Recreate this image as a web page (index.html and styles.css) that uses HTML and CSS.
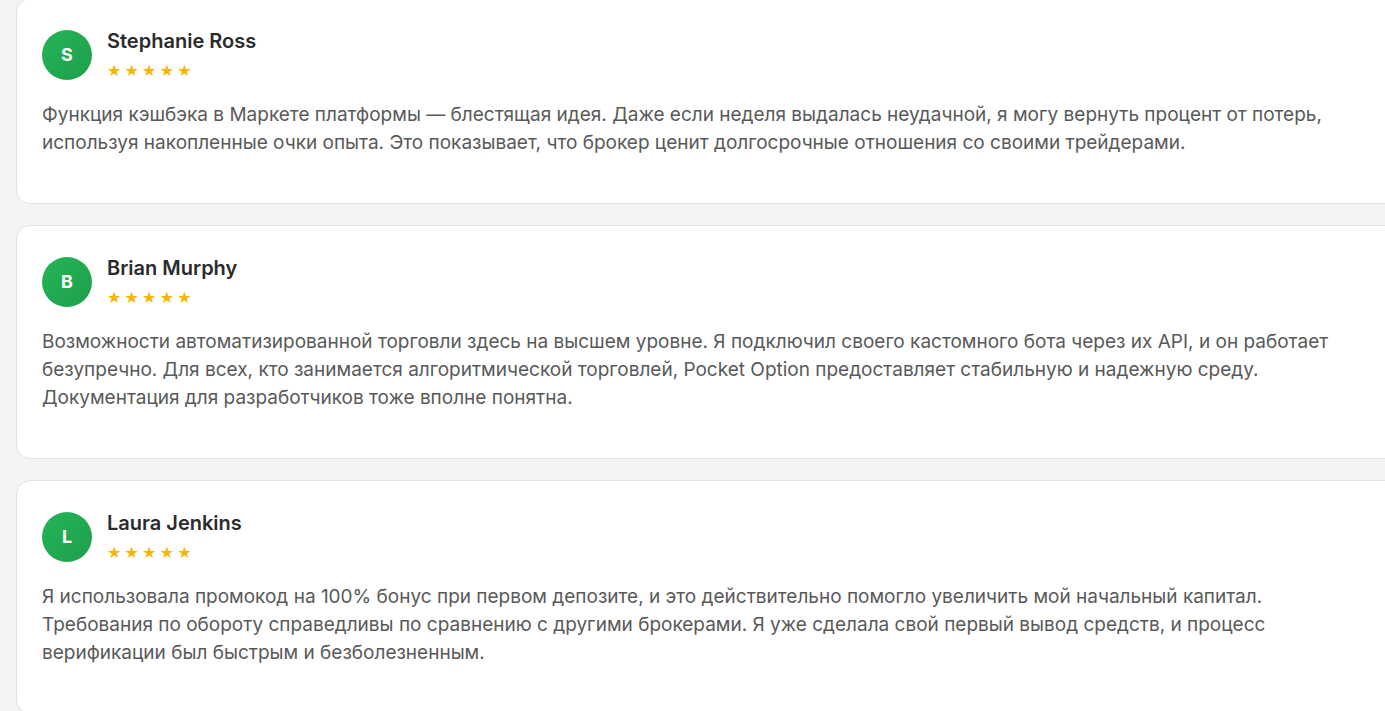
FILE: index.html
```html
<!DOCTYPE html>
<html lang="ru">
<head>
<meta charset="utf-8">
<title>Отзывы</title>
<link rel="stylesheet" href="styles.css">
</head>
<body>
<div class="reviews">
  <article class="card">
    <div class="head">
      <div class="avatar">S</div>
      <div class="meta">
        <div class="name">Stephanie Ross</div>
        <div class="stars">★★★★★</div>
      </div>
    </div>
    <p class="text">Функция кэшбэка в Маркете платформы — блестящая идея. Даже если неделя выдалась неудачной, я могу вернуть процент от потерь, используя накопленные очки опыта. Это показывает, что брокер ценит долгосрочные отношения со своими трейдерами.</p>
  </article>
  <article class="card">
    <div class="head">
      <div class="avatar">B</div>
      <div class="meta">
        <div class="name">Brian Murphy</div>
        <div class="stars">★★★★★</div>
      </div>
    </div>
    <p class="text">Возможности автоматизированной торговли здесь на высшем уровне. Я подключил своего кастомного бота через их API, и он работает безупречно. Для всех, кто занимается алгоритмической торговлей, Pocket Option предоставляет стабильную и надежную среду. Документация для разработчиков тоже вполне понятна.</p>
  </article>
  <article class="card">
    <div class="head">
      <div class="avatar">L</div>
      <div class="meta">
        <div class="name">Laura Jenkins</div>
        <div class="stars">★★★★★</div>
      </div>
    </div>
    <p class="text">Я использовала промокод на 100% бонус при первом депозите, и это действительно помогло увеличить мой начальный капитал. Требования по обороту справедливы по сравнению с другими брокерами. Я уже сделала свой первый вывод средств, и процесс верификации был быстрым и безболезненным.</p>
  </article>
</div>
</body>
</html>
```
FILE: styles.css
```css
html, body {
  margin: 0;
  padding: 0;
  overflow: hidden;
  background: #f4f4f4;
}
body {
  font-family: Inter, "Noto Sans", "DejaVu Sans", sans-serif;
}
.reviews {
  display: flex;
  flex-direction: column;
  gap: 21px;
  margin-top: -2px;
  padding-left: 16px;
  width: 1420px;
}
.card {
  background: #ffffff;
  border: 1px solid #e2e2e2;
  border-radius: 14px;
  padding: 30px 25px 46px 25px;
}
.head {
  display: flex;
  align-items: center;
  gap: 15px;
}
.avatar {
  width: 50px;
  height: 50px;
  border-radius: 50%;
  background: linear-gradient(135deg, #24b457, #1e9f4c);
  color: #ffffff;
  font-weight: 700;
  font-size: 18px;
  display: flex;
  align-items: center;
  justify-content: center;
  flex-shrink: 0;
}
.meta {
  display: flex;
  flex-direction: column;
  gap: 9px;
}
.name {
  font-size: 20px;
  font-weight: 600;
  color: #2b2b2b;
  line-height: 24px;
}
.stars {
  color: #f7b500;
  font-size: 16px;
  letter-spacing: 3.2px;
  line-height: 18px;
  font-family: "DejaVu Sans", sans-serif;
}
.text {
  margin: 21px 0 0 0;
  max-width: 1292px;
  font-size: 19px;
  line-height: 28px;
  color: #595959;
}
```
